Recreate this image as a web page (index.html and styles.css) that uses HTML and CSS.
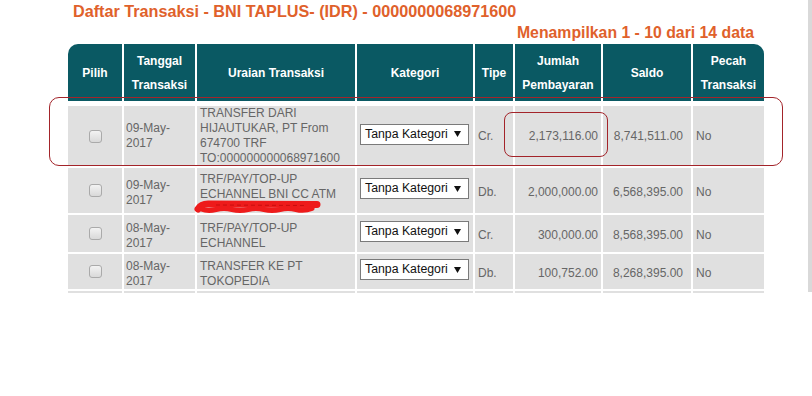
FILE: index.html
```html
<!DOCTYPE html>
<html lang="id">
<head>
<meta charset="utf-8">
<title>Daftar Transaksi</title>
<link rel="stylesheet" href="styles.css">
</head>
<body>
<div class="page">
  <div class="main">
    <div class="block">
      <h1 class="title">Daftar Transaksi - BNI TAPLUS- (IDR) - 0000000068971600</h1>
      <div class="count">Menampilkan 1 - 10 dari 14 data</div>
      <table class="trx">
        <colgroup>
          <col class="c-pilih"><col class="c-tgl"><col class="c-uraian"><col class="c-kat">
          <col class="c-tipe"><col class="c-jml"><col class="c-saldo"><col class="c-pecah">
        </colgroup>
        <thead>
          <tr class="head">
            <th class="first">Pilih</th>
            <th>Tanggal<br>Transaksi</th>
            <th>Uraian Transaksi</th>
            <th>Kategori</th>
            <th>Tipe</th>
            <th>Jumlah<br>Pembayaran</th>
            <th>Saldo</th>
            <th class="last">Pecah<br>Transaksi</th>
          </tr>
        </thead>
        <tbody>
          <tr class="r1">
            <td class="chk"><span class="box"></span></td>
            <td class="tgl">09-May-<br>2017</td>
            <td class="ur">TRANSFER DARI<br>HIJAUTUKAR, PT From<br>674700 TRF<br>TO:000000000068971600</td>
            <td class="kat"><div class="sel"><span>Tanpa Kategori</span><svg class="arr" width="7" height="6" viewBox="0 0 7 6"><polygon points="0,0 7,0 3.5,6" fill="#111"/></svg></div></td>
            <td class="tipe">Cr.</td>
            <td class="num">2,173,116.00</td>
            <td class="saldo">8,741,511.00</td>
            <td class="pecah">No</td>
          </tr>
          <tr class="r2">
            <td class="chk"><span class="box"></span></td>
            <td class="tgl">09-May-<br>2017</td>
            <td class="ur">TRF/PAY/TOP-UP<br>ECHANNEL BNI CC ATM<svg class="scribble" width="128" height="11" viewBox="0 0 128 11"><path d="M2 7 Q5 2 12 2 L121 2.5" stroke="#ee1b1b" stroke-width="7" fill="none" stroke-linecap="round"/><path d="M5 7 Q12 9.5 20 7.5 T36 7.5 T52 7.5 T68 7.5 T84 7.5 T100 7.5 T116 6.5" stroke="#ee1b1b" stroke-width="5" fill="none" stroke-linecap="round"/><path d="M20 3 L110 3.5" stroke="#c80e0e" stroke-width="1" fill="none" stroke-dasharray="4 3"/></svg></td>
            <td class="kat"><div class="sel"><span>Tanpa Kategori</span><svg class="arr" width="7" height="6" viewBox="0 0 7 6"><polygon points="0,0 7,0 3.5,6" fill="#111"/></svg></div></td>
            <td class="tipe">Db.</td>
            <td class="num">2,000,000.00</td>
            <td class="saldo">6,568,395.00</td>
            <td class="pecah">No</td>
          </tr>
          <tr class="r3">
            <td class="chk"><span class="box"></span></td>
            <td class="tgl">08-May-<br>2017</td>
            <td class="ur">TRF/PAY/TOP-UP<br>ECHANNEL</td>
            <td class="kat"><div class="sel"><span>Tanpa Kategori</span><svg class="arr" width="7" height="6" viewBox="0 0 7 6"><polygon points="0,0 7,0 3.5,6" fill="#111"/></svg></div></td>
            <td class="tipe">Cr.</td>
            <td class="num">300,000.00</td>
            <td class="saldo">8,568,395.00</td>
            <td class="pecah">No</td>
          </tr>
          <tr class="r4">
            <td class="chk"><span class="box"></span></td>
            <td class="tgl">08-May-<br>2017</td>
            <td class="ur">TRANSFER KE PT<br>TOKOPEDIA</td>
            <td class="kat"><div class="sel"><span>Tanpa Kategori</span><svg class="arr" width="7" height="6" viewBox="0 0 7 6"><polygon points="0,0 7,0 3.5,6" fill="#111"/></svg></div></td>
            <td class="tipe">Db.</td>
            <td class="num">100,752.00</td>
            <td class="saldo">8,268,395.00</td>
            <td class="pecah">No</td>
          </tr>
          <tr class="r5">
            <td></td><td></td><td></td><td></td><td></td><td></td><td></td><td></td>
          </tr>
        </tbody>
      </table>
    </div>
    <div class="mark mark-row"></div>
    <div class="mark mark-amt"></div>
  </div>
  <div class="strip"></div>
</div>
</body>
</html>
```
FILE: styles.css
```css
html, body {
  margin: 0;
  padding: 0;
  background: #fff;
}
body {
  font-family: "Liberation Sans", Arial, sans-serif;
  width: 812px;
  height: 396px;
  overflow: hidden;
}
.page {
  display: flex;
  align-items: flex-start;
}
.main {
  position: relative;
  width: 808px;
  height: 293px;
  overflow: hidden;
}
.strip {
  width: 4px;
  height: 292px;
  background: #d9d9d9;
}
.block {
  width: 700px;
  margin-left: 66px;
  padding-top: 2px;
}
.title {
  margin: 0;
  padding-left: 7px;
  font-size: 16.2px;
  line-height: 19px;
  font-weight: bold;
  color: #e0612b;
  white-space: nowrap;
}
.count {
  margin-top: 2px;
  padding-right: 12px;
  text-align: right;
  font-size: 15.8px;
  line-height: 19px;
  font-weight: bold;
  color: #e0612b;
}
.trx {
  table-layout: fixed;
  width: 700px;
  border-collapse: separate;
  border-spacing: 2px;
  font-size: 12px;
  line-height: 15px;
  color: #666;
}
.c-pilih { width: 54px; }
.c-tgl { width: 71px; }
.c-uraian { width: 158px; }
.c-kat { width: 116px; }
.c-tipe { width: 38px; }
.c-jml { width: 86px; }
.c-saldo { width: 88px; }
.c-pecah { width: 71px; }

.head { height: 60px; }
.head th {
  background: #0a5963;
  color: #fff;
  font-weight: bold;
  font-size: 12px;
  line-height: 24px;
  text-align: center;
  vertical-align: middle;
  padding: 0;
  border-bottom: 3px solid #fff;
}
.head th.first { border-top-left-radius: 10px; }
.head th.last { border-top-right-radius: 10px; }

.trx td {
  background: #e0e0e0;
  vertical-align: middle;
  padding: 4px 3px 0 3px;
  white-space: nowrap;
}
.trx tr.r1 td { padding-top: 0; }
.trx td.chk { text-align: center; padding: 0; }
.trx td.kat { padding: 0 0 0 3px; }
.trx td.tgl { padding-left: 2px; }
.trx td.num { text-align: right; }
.trx td.saldo { text-align: right; padding-right: 8px; }

.r3 { height: 37px; }
.r4 { height: 35px; }
.r5 { height: 30px; }

.box {
  display: inline-block;
  vertical-align: middle;
  width: 11px;
  height: 11px;
  border: 1px solid #aaa;
  border-radius: 3px;
  background: linear-gradient(#f3f3f3, #d9d9d9);
}
.sel {
  display: flex;
  align-items: center;
  justify-content: space-between;
  box-sizing: border-box;
  width: 109px;
  height: 21px;
  margin-bottom: 4px;
  padding: 0 7px 0 4px;
  background: #fff;
  border: 1px solid #7a7a7a;
  color: #111;
  font-size: 12.3px;
  line-height: 15px;
}
.arr { display: block; }
.scribble {
  display: block;
  margin-left: -4px;
  overflow: visible;
}
.mark {
  position: absolute;
  box-sizing: border-box;
  border: 1.5px solid #a3242a;
  pointer-events: none;
}
.mark-row {
  left: 49px;
  top: 97px;
  width: 734px;
  height: 69px;
  border-radius: 10px;
}
.mark-amt {
  left: 504px;
  top: 112px;
  width: 104px;
  height: 45px;
  border-radius: 8px;
}
```
